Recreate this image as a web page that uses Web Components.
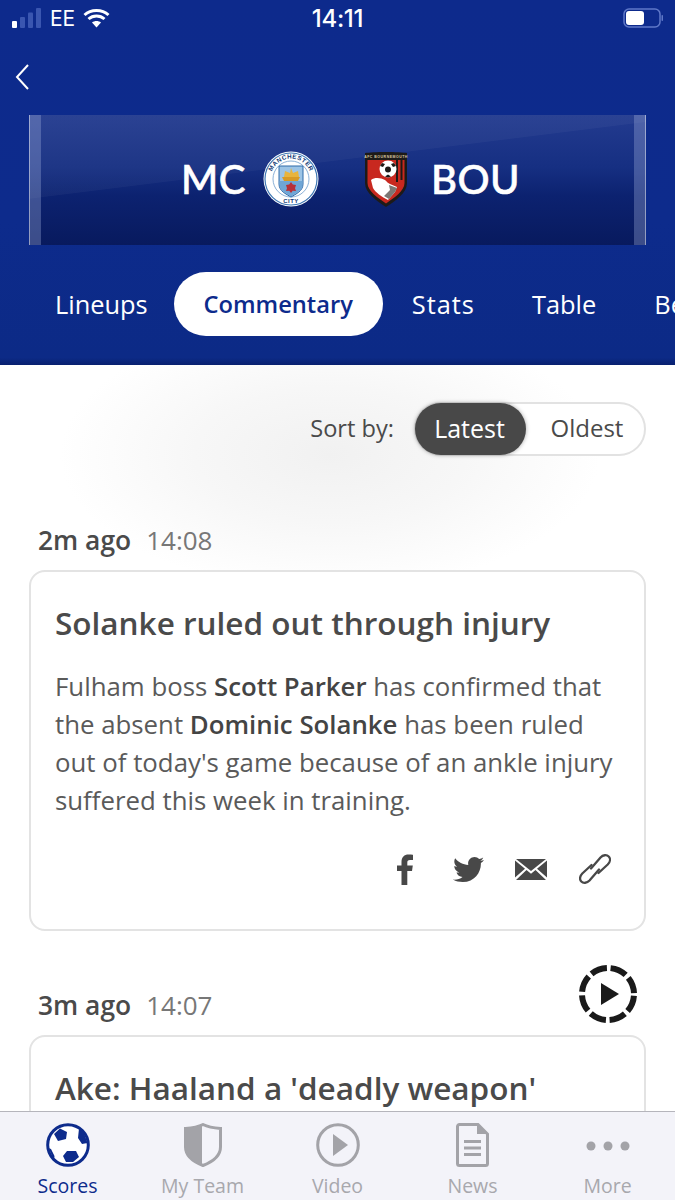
<!DOCTYPE html>
<html lang="en"><head><meta charset="utf-8"><title>Commentary</title>
<style>
html,body{margin:0;padding:0;background:#fff}
body{font-family:"Open Sans","Liberation Sans",sans-serif;color:#4a4a4a}
b{font-weight:600;color:#444}
</style></head><body>
<app-shell>
  <match-header slot="header"></match-header>
  <sort-control slot="content"></sort-control>
  <comment-entry slot="content" ago="2m ago" time="14:08" title="Solanke ruled out through injury">
    Fulham boss <b>Scott Parker</b> has confirmed that the absent <b>Dominic Solanke</b> has been ruled out of today's game because of an ankle injury suffered this week in training.
  </comment-entry>
  <comment-entry slot="content" ago="3m ago" time="14:07" title="Ake: Haaland a 'deadly weapon'" video></comment-entry>
  <bottom-nav slot="nav"></bottom-nav>
</app-shell>
<script>
function def(name, html, setup){
  customElements.define(name, class extends HTMLElement{
    connectedCallback(){
      if(this.shadowRoot) return;
      const r=this.attachShadow({mode:'open'});
      r.innerHTML=typeof html==='function'?html(this):html;
      if(setup) setup(this,r);
    }
  });
}
def('app-shell',`<style>
:host{display:flex;flex-direction:column;width:675px;height:1200px;overflow:hidden;background:#fff}
.main{flex:1;min-height:0;overflow:hidden;background:radial-gradient(ellipse 270px 135px at 330px 90px,#f1f1f1 0,#f7f7f7 50%,#fff 100%)}
</style><slot name="header"></slot><div class="main"><slot name="content"></slot></div><slot name="nav"></slot>`);

def('status-bar',`<style>
:host{display:grid;grid-template-columns:1fr auto 1fr;align-items:center;height:36px;padding-bottom:1px;color:#fff;font:400 22px "Inter","Liberation Sans",sans-serif}
.l{display:flex;align-items:center;padding-left:12px;gap:8px}
.r{display:flex;justify-content:flex-end;padding-right:12px}
svg{display:block}
.ee{font-size:21px;letter-spacing:-.2px}
.t{font-weight:500;font-size:24px;letter-spacing:-.3px}
</style><div class="l">
<svg width="30" height="20" viewBox="0 0 30 20"><rect x="0" y="13" width="5" height="7" rx="1" fill="#fff"/><rect x="8" y="9" width="5" height="11" rx="1" fill="#3a56b0"/><rect x="16" y="4.500" width="5" height="15.500" rx="1" fill="#3a56b0"/><rect x="24" y="0" width="5" height="20" rx="1" fill="#3a56b0"/></svg>
<span class="ee">EE</span>
<svg width="27" height="20" viewBox="0 0 27 20" fill="none" stroke="#fff" stroke-width="3"><path d="M1.500 7 C8 1 19 1 25.500 7"/><path d="M5.500 11 C10 7 17 7 21.500 11"/><path d="M13.500 19.500 L9 14.500 C11.500 12.500 15.500 12.500 18 14.500 Z" fill="#fff" stroke="none"/></svg>
</div><div class="t">14:11</div><div class="r">
<svg width="40" height="20" viewBox="0 0 40 20"><rect x="1" y="1" width="36" height="18" rx="5" fill="none" stroke="#5f78c8" stroke-width="1.500"/><rect x="3" y="3" width="18" height="14" rx="3" fill="#fff"/><rect x="38.500" y="7" width="1.500" height="6" rx=".7" fill="#5f78c8"/></svg>
</div>`);

def('city-crest',`<style>:host{display:block;width:56px;height:56px}svg{display:block}</style>
<svg width="56" height="56" viewBox="0 0 56 56"><circle cx="28" cy="28" r="27.500" fill="#fff"/><circle cx="28" cy="28" r="26" fill="none" stroke="#3f78b4" stroke-width="1.200"/><circle cx="28" cy="28" r="24.500" fill="#fff"/><circle cx="28" cy="28" r="18" fill="#fff" stroke="#6d9ccb" stroke-width=".8"/>
<path id="a" d="M7.600 28 A20.400 20.400 0 0 1 48.400 28" fill="none"/>
<text font-family="Liberation Sans" font-size="6.200" font-weight="700" fill="#123a75"><textPath href="#a" startOffset="50%" text-anchor="middle">MANCHESTER</textPath></text>
<text x="28" y="52" text-anchor="middle" font-family="Liberation Sans" font-size="6" font-weight="700" fill="#123a75">CITY</text>
<path d="M16 15 H40 V33 C40 40 33 43 28 46 C23 43 16 40 16 33 Z" fill="#9cc4e6" stroke="#2f6aa8" stroke-width="1"/>
<path d="M21 26 L22 20 L27 22 L28 17 L30 22 L35 20 L36 26 Z" fill="#e8b43c"/><path d="M19 26 H37 L35 30 H21 Z" fill="#d89a24"/>
<path d="M16.500 30 H39.500 V33 C39.500 36 38 38 36 40 C33 42 30 44 28 45.400 C26 44 23 42 20 40 C18 38 16.500 36 16.500 33 Z" fill="#6fa6d6"/>
<path d="M28 31 L29.800 33.500 L33 34 L32 37.300 L33 40 L29.700 39.800 L28 42 L26.300 39.800 L23 40 L24 37.300 L23 34 L26.200 33.500 Z" fill="#b83038"/></svg>`);

def('bou-crest',`<style>:host{display:block;width:44px;height:56px}svg{display:block}</style>
<svg width="44" height="56" viewBox="0 0 44 56"><path d="M1 2 C8 .5 36 .5 43 2 L43 32 C43 42 31 50 22 56 C13 50 1 42 1 32 Z" fill="#1d1a18"/>
<text x="22" y="7.200" text-anchor="middle" font-family="Liberation Sans" font-size="3.500" font-weight="700" fill="#d9c9a3">AFC BOURNEMOUTH</text>
<path d="M3.500 9 H40.500 V32 C40.500 40 30 47 22 52.500 C14 47 3.500 40 3.500 32 Z" fill="#c8281f"/>
<path d="M32 9 h2 v22 h-2z M36.500 9 h2 v20 h-2z" fill="#1d1a18"/>
<path d="M7 29 C11 26 17 27 21 29 C23 31 24 32 26 33 L33 36 L31 41 L24 49 C18 46 11 41 9 37 Z" fill="#fff"/>
<path d="M25 34 L33 37 L31 41 L25 48 L20 45 L26 39 Z" fill="#7c7774"/>
<circle cx="24" cy="18" r="8.500" fill="#fff"/><circle cx="24" cy="18.500" r="3" fill="#1d1a18"/><path d="M18 12 l3 1 -2 3 -3-1z M30 12 l-3 1 2 3 3-1z M21 25.500 l3-2 3 2 -3 1z" fill="#1d1a18"/></svg>`);

def('match-banner',`<style>
:host{display:block;height:130px;margin:0 29px;position:relative;overflow:hidden;background:linear-gradient(180deg,#233b8f 0,#162f82 40%,#0c2270 62%,#081a5e 100%)}
.shine{position:absolute;inset:0;background:linear-gradient(172.900deg,rgba(255,255,255,.035) 0,rgba(255,255,255,.035) 40.300%,rgba(255,255,255,0) 40.700%)}
.strip{position:absolute;top:0;bottom:0;width:11px;background:rgba(160,175,220,.34)}
.l{left:0;border-left:1px solid rgba(255,255,255,.45)}
.r{right:0;border-right:1px solid rgba(255,255,255,.45)}
.row{position:relative;height:100%;box-sizing:border-box;padding:0 0 2px 26px;display:flex;align-items:center;justify-content:center;color:#fff;font:500 40px "Lato","Open Sans",sans-serif;letter-spacing:.5px;-webkit-text-stroke:.6px #fff}
.mc{display:flex;align-items:center;gap:17px}
.bou{display:flex;align-items:center;gap:23px}
.vs{width:45px}
</style><div class="shine"></div><div class="strip l"></div><div class="strip r"></div>
<div class="row"><div class="mc"><span>MC</span><city-crest></city-crest></div><div class="vs"></div><div class="bou"><bou-crest></bou-crest><span>BOU</span></div></div>`);

def('tab-pills',`<style>
:host{display:flex;align-items:center;height:64px;overflow:hidden;white-space:nowrap;font:400 25.400px "Open Sans",sans-serif;color:#fff}
span{display:block;flex:none}
.on{background:#fff;color:#0d2b8c;font-weight:600;font-size:23.700px;border-radius:32px;height:64px;line-height:64px;width:209px;text-align:center}
</style><span style="margin-left:55px">Lineups</span><span class="on" style="margin-left:26px">Commentary</span><span style="margin-left:29px;letter-spacing:1px">Stats</span><span style="margin-left:57px">Table</span><span style="margin-left:58px">Bet</span>`);

def('match-header',`<style>
:host{display:block;height:365px;box-sizing:border-box;background:linear-gradient(180deg,#0d2a8c 0,#0d2b8c 60%,#0c2a86 98%,#08206f 100%)}
.back{height:78px;display:flex;align-items:center;padding-left:15px;box-sizing:border-box;padding-top:1px}
svg{display:block}
tab-pills{margin-top:27px}
</style><status-bar></status-bar><div class="back"><svg width="14" height="26" viewBox="0 0 14 26" fill="none" stroke="#fff" stroke-width="2"><path d="M13 1 L2 13 L13 25"/></svg></div>
<match-banner></match-banner><tab-pills></tab-pills>`);

def('sort-control',`<style>
:host{display:flex;justify-content:flex-end;align-items:center;gap:20px;padding:37px 29px 54px 0;font:400 23.600px "Open Sans",sans-serif;color:#4a4a4a}
.lab{padding-bottom:3px}
.pill{display:flex;width:232px;height:54px;box-sizing:border-box;border:2px solid #e2e2e2;border-radius:27px;background:#fff}
.a{width:111px;height:52px;margin:-1px 0 0 -1px;border-radius:26px;background:#484848;color:#fff;font-size:25px;display:flex;align-items:center;justify-content:center;box-shadow:0 0 4px rgba(0,0,0,.35);box-sizing:border-box;padding:0 2px 3px 0}
.b{flex:1;display:flex;align-items:center;justify-content:center;font-size:24px;box-sizing:border-box;padding:0 0 3px 4px}
</style><span class="lab">Sort by:</span><div class="pill"><div class="a">Latest</div><div class="b">Oldest</div></div>`);

def('share-row',`<style>
:host{display:flex;justify-content:flex-end;align-items:center;fill:#484848}
svg{display:block}
</style>
<svg width="18" height="31" viewBox="0 0 18 31" style="margin-right:39px"><path d="M5.500 31 V17 H1 V11.500 H5.500 V8 C5.500 3 8.300 .5 12.500 .5 C14.500 .5 16 .7 17 .8 V6 H14 C11.800 6 11.300 7 11.300 8.700 V11.500 H16.800 L16 17 H11.300 V31 Z"/></svg>
<svg width="31" height="25" viewBox="0 0 31 25" style="margin-right:31px"><path d="M31 3 C29.900 3.500 28.700 3.800 27.400 4 C28.700 3.200 29.700 2 30.200 .5 C29 1.200 27.600 1.700 26.200 2 C25 .7 23.300 0 21.500 0 C18 0 15.100 2.900 15.100 6.400 C15.100 6.900 15.200 7.400 15.300 7.900 C10 7.600 5.300 5.100 2.200 1.200 C1.600 2.100 1.300 3.200 1.300 4.400 C1.300 6.600 2.400 8.600 4.200 9.700 C3.100 9.700 2.100 9.400 1.300 8.900 V9 C1.300 12.100 3.500 14.700 6.400 15.300 C5.300 15.600 4.200 15.600 3.500 15.500 C4.300 18 6.700 19.900 9.500 20 C7.300 21.700 4.500 22.700 1.500 22.700 C1 22.700 .5 22.700 0 22.600 C2.800 24.400 6.200 25 9.800 25 C21.500 25 27.900 15.300 27.900 6.900 V6.100 C29.100 5.300 30.200 4.200 31 3 Z"/></svg>
<svg width="32" height="21" viewBox="0 0 32 21" style="margin-right:32px"><path d="M1 0 H31 L16 12 Z"/><path d="M0 1.500 L10 9.800 L0 18.500 Z M32 1.500 L22 9.800 L32 18.500 Z"/><path d="M11.500 11 L16 14.700 L20.500 11 L31 21 H1 Z"/></svg>
<svg width="32" height="32" viewBox="0 0 32 32" fill="none" stroke="#484848" stroke-width="2.300" stroke-linecap="round"><path d="M12 15.500 L21.500 4.500 C24 1.800 27.700 1.500 29.700 3.500 C31.700 5.500 31.200 9 28.700 11.500 L19.500 20"/><path d="M20 16.500 L10.500 27.500 C8 30.200 4.300 30.500 2.300 28.500 C.3 26.500 .8 23 3.300 20.500 L12.500 12"/></svg>`);

def('comment-entry',el=>{
  const video=el.hasAttribute('video');
  return `<style>
:host{display:block;margin:0 29px 44px}
.when{display:flex;align-items:center;height:60px;padding:0 0 1px 9px;box-sizing:border-box;gap:15px;position:relative;font:400 26px "Open Sans",sans-serif;color:#777}
.ago{font-weight:600;font-size:26.400px;color:#4a4a4a}
.vid{position:absolute;right:8px;top:-11px;display:block}
.card{box-sizing:border-box;border:2px solid #e3e3e3;border-radius:16px;background:#fff;padding:28px 24px 0;height:${video?'200px':'361px'}}
h2{margin:0;font:600 31.500px/46px "Open Sans",sans-serif;color:#4a4a4a;white-space:nowrap}
.body{margin:21px 0 0;font:400 25.800px/38px "Open Sans",sans-serif;color:#5a5a5a;width:568px}
share-row{margin:34px 9px 0 0}
</style><div class="when"><span class="ago">${el.getAttribute('ago')}</span><span>${el.getAttribute('time')}</span>${video?`<svg class="vid" width="60" height="60" viewBox="0 0 60 60"><circle cx="30" cy="30" r="26" fill="none" stroke="#1a1a1a" stroke-width="6" stroke-dasharray="16.600 3.820" stroke-dashoffset="-1.900"/><path d="M23 19 L41 30 L23 41 Z" fill="#1a1a1a"/></svg>`:''}</div>
<div class="card"><h2>${el.getAttribute('title')}</h2>${video?'':'<div class="body"><slot></slot></div><share-row></share-row>'}</div>`;
});

def('nav-item',el=>`<style>
:host{display:flex;flex:1;flex-direction:column;align-items:center;height:89px;box-sizing:border-box;font:400 19.500px "Open Sans",sans-serif;color:${el.hasAttribute('active')?'#0d2b8c':'#a8a8ad'}}
.i{height:54px;display:flex;align-items:center;justify-content:center;padding-top:11px;box-sizing:border-box}
.t{line-height:24px;margin-top:8px}
::slotted(svg){display:block}
</style><div class="i"><slot></slot></div><div class="t">${el.getAttribute('label')}</div>`);

def('bottom-nav',`<style>
:host{display:flex;height:89px;box-sizing:border-box;background:#f3f3f9;border-top:1.500px solid #b5b5bc}
svg{display:block}
</style>
<nav-item active label="Scores"><svg width="44" height="44" viewBox="0 0 44 44"><circle cx="22" cy="22" r="20.300" fill="#fff" stroke="#0d2b8c" stroke-width="3"/><path d="M14 5.500 L21 9 L20 16 L12 18 L8 11 Z M33 5.500 L38 10 L41.500 20 L36 21 L32 15 Z M21 28 L30 28 L33 34 L27 39 L20 39 L17 33 Z M2.500 25 L5 26 L8.500 33 L8 37 Z" fill="#0d2b8c"/></svg></nav-item>
<nav-item label="My Team"><svg width="38" height="44" viewBox="0 0 38 44"><path d="M19 1.500 C24 4 30 5 36.500 5.500 V24 C36.500 33 28 39 19 42.500 C10 39 1.500 33 1.500 24 V5.500 C8 5 14 4 19 1.500 Z" fill="none" stroke="#a3a3a8" stroke-width="3"/><path d="M18 2 V42 C9 39 1.500 33 1.500 24 V5.500 C8 5 13 4 18 2 Z" fill="#a3a3a8"/></svg></nav-item>
<nav-item label="Video"><svg width="44" height="44" viewBox="0 0 44 44"><circle cx="22" cy="22" r="20.300" fill="none" stroke="#a3a3a8" stroke-width="3"/><path d="M17 11 L32 22 L17 33 Z" fill="#a3a3a8"/></svg></nav-item>
<nav-item label="News"><svg width="33" height="44" viewBox="0 0 33 44" fill="none" stroke="#a3a3a8"><path d="M22 1.500 H3.500 A2 2 0 0 0 1.500 3.500 V40.500 A2 2 0 0 0 3.500 42.500 H29.500 A2 2 0 0 0 31.500 40.500 V11 Z" stroke-width="3"/><path d="M21 1.500 L31.500 11 H21 Z" fill="#a3a3a8" stroke="none"/><path d="M8 18.500 H25 M8 25 H25 M8 31.500 H25" stroke-width="3"/></svg></nav-item>
<nav-item label="More"><svg width="46" height="44" viewBox="0 0 46 44" fill="#a3a3a8"><circle cx="6" cy="23" r="4.500"/><circle cx="23" cy="23" r="4.500"/><circle cx="40" cy="23" r="4.500"/></svg></nav-item>`);
</script>
</body></html>
